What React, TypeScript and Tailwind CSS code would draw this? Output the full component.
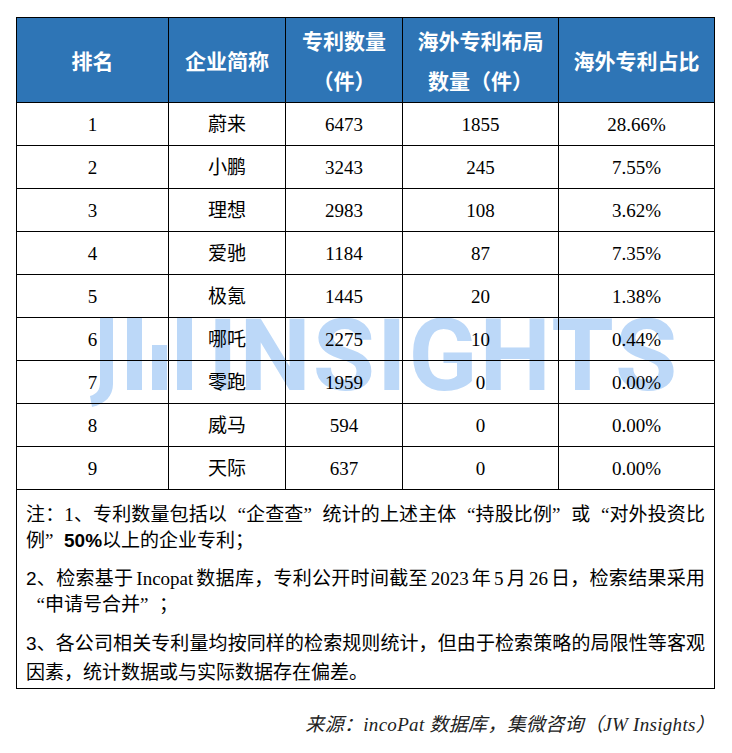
import React from 'react';

const rows = [
  ['1', '蔚来', '6473', '1855', '28.66%'],
  ['2', '小鹏', '3243', '245', '7.55%'],
  ['3', '理想', '2983', '108', '3.62%'],
  ['4', '爱驰', '1184', '87', '7.35%'],
  ['5', '极氪', '1445', '20', '1.38%'],
  ['6', '哪吒', '2275', '10', '0.44%'],
  ['7', '零跑', '1959', '0', '0.00%'],
  ['8', '威马', '594', '0', '0.00%'],
  ['9', '天际', '637', '0', '0.00%'],
];

const serif = "font-['Liberation_Serif','Noto_Sans_CJK_SC',serif]";

// full-width curly quotes, as in the source document
const Lq = () => <span className="inline-flex w-[19px] justify-end">“</span>;
const Rq = () => <span className="inline-flex w-[19px] justify-start">”</span>;

function Watermark() {
  return (
    <div className="pointer-events-none absolute left-0 top-0 z-0 h-full w-full">
      {/* JW logo mark */}
      <svg className="absolute left-[88px] top-[316px]" width="106" height="92" viewBox="0 0 106 92" fill="#bcd8f8">
        <path d="M12 2 H25 V68 C25 80 17 88 4 91 L2 80 C9 78 12 74 12 66 Z" />
        <rect x="39" y="2" width="15" height="72" />
        <rect x="64" y="29" width="15" height="45" />
        <rect x="89" y="2" width="15" height="72" />
      </svg>
      <div className="absolute left-[208px] top-[305px] font-['Roboto',sans-serif] text-[101px] font-bold leading-none tracking-[2px] text-[#bcd8f8]">
        INSIGHTS
      </div>
    </div>
  );
}

export default function App() {
  return (
    <div className="relative h-[753px] w-[732px] overflow-hidden bg-white pl-[16px] pt-[17px]">
      <Watermark />

      <table className={`relative z-10 w-[698px] table-fixed border-collapse text-black ${serif}`}>
        <colgroup>
          <col className="w-[152px]" />
          <col className="w-[117px]" />
          <col className="w-[117px]" />
          <col className="w-[156px]" />
          <col className="w-[156px]" />
        </colgroup>
        <thead>
          <tr className="h-[85px] bg-[#2e75b6] font-['Noto_Sans_CJK_SC',sans-serif] text-[21px] font-bold leading-[40px] text-white">
            <th className="border border-black text-center align-middle font-bold">排名</th>
            <th className="border border-black text-center align-middle font-bold">企业简称</th>
            <th className="border border-black text-center align-middle font-bold">
              专利数量
              <br />
              （件）
            </th>
            <th className="border border-black text-center align-middle font-bold">
              海外专利布局
              <br />
              数量（件）
            </th>
            <th className="border border-black text-center align-middle font-bold">海外专利占比</th>
          </tr>
        </thead>
        <tbody className="text-[19px]">
          {rows.map((r) => (
            <tr key={r[0]} className="h-[43px]">
              {r.map((c, i) => (
                <td key={i} className="border border-black p-0 text-center align-middle leading-none">
                  {c}
                </td>
              ))}
            </tr>
          ))}
          <tr>
            <td colSpan={5} className="border border-black px-[9px] pb-[2px] pt-[12px] align-top text-[19px] leading-[26px]">
              <div className="text-justify [text-align-last:justify]">
                注：1、专利数量包括以<Lq />企查查<Rq />统计的上述主体<Lq />持股比例<Rq />或<Lq />对外投资比
              </div>
              <div>
                例<Rq /><span className="font-['Liberation_Sans',sans-serif] font-bold">50%</span>以上的企业专利；
              </div>
              <div className="mt-[12px] text-justify [text-align-last:justify] [word-spacing:-2px]">
                <span className="font-['Liberation_Sans',sans-serif]">2</span>、检索基于 Incopat 数据库，专利公开时间截至 2023 年 5 月 26 日，检索结果采用
              </div>
              <div>
                <Lq />申请号合并<Rq />；
              </div>
              <div className="mt-[13px] text-justify [text-align-last:justify]">
                <span className="font-['Liberation_Sans',sans-serif]">3</span>、各公司相关专利量均按同样的检索规则统计，但由于检索策略的局限性等客观
              </div>
              <div className="mt-[3px]">因素，统计数据或与实际数据存在偏差。</div>
            </td>
          </tr>
        </tbody>
      </table>

      <div className={`relative z-10 mt-[23px] w-[699px] text-right text-[19px] italic leading-[26px] tracking-[0.3px] text-[#222] ${serif}`}>
        来源：incoPat 数据库，集微咨询（JW Insights）
      </div>
    </div>
  );
}
